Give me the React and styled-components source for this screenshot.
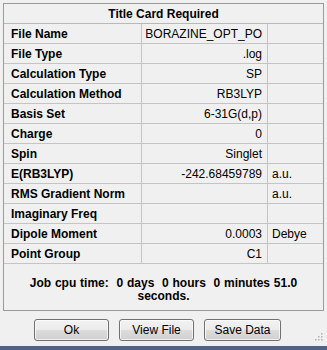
import React from 'react';
import styled, { createGlobalStyle } from 'styled-components';

const GlobalStyle = createGlobalStyle`
  html, body {
    margin: 0;
    padding: 0;
    background: #f0f0f0;
  }
  body {
    font-family: 'Liberation Sans', Arial, sans-serif;
    font-size: 12px;
    color: #000;
  }
`;

const Window = styled.div`
  width: 327px;
  height: 350px;
  display: flex;
  flex-direction: column;
  background: #f0f0f0;
  box-sizing: border-box;
  border-bottom: 4px solid #4d6580;
`;

const Panel = styled.div`
  margin: 3px 3px 0 3px;
  border: 1px solid #9a9a9a;
  height: 308px;
  box-sizing: border-box;
  display: flex;
  flex-direction: column;
`;

const Header = styled.div`
  height: 20px;
  display: flex;
  align-items: center;
  justify-content: center;
  font-weight: bold;
  border-bottom: 1px solid #b8b8b8;
  box-sizing: border-box;
`;

const Row = styled.div`
  display: grid;
  grid-template-columns: 138px 126px 1fr;
  height: 20px;
  border-bottom: 1px solid #c4c4c4;
  box-sizing: border-box;
`;

const Cell = styled.div`
  display: flex;
  align-items: center;
  padding: 0 ${(p) => (p.$align === 'right' ? '5px' : '4px')} 0 ${(p) => (p.$label ? '7px' : '4px')};
  justify-content: ${(p) => (p.$align === 'right' ? 'flex-end' : 'flex-start')};
  font-weight: ${(p) => (p.$label ? 'bold' : 'normal')};
  border-right: ${(p) => (p.$last ? 'none' : '1px solid #c4c4c4')};
  white-space: nowrap;
  overflow: hidden;
`;

const JobTime = styled.div`
  flex: 1;
  display: flex;
  flex-direction: column;
  align-items: center;
  padding-top: 13px;
  font-weight: bold;
  line-height: 13px;
  word-spacing: 0.5px;
`;

const ButtonBar = styled.div`
  flex: 1;
  display: flex;
  align-items: center;
  gap: 10px;
  padding: 3px 0 0 34px;
  position: relative;
`;

const Button = styled.button`
  width: ${(p) => p.$width || 75}px;
  height: 22px;
  border: 1px solid #707070;
  border-radius: 3px;
  background: linear-gradient(#f2f2f2 0%, #ebebeb 50%, #dddddd 51%, #cfcfcf 100%);
  font-family: 'Liberation Sans', Arial, sans-serif;
  font-size: 12px;
  color: #000;
  padding: 0;
  box-shadow: inset 0 0 0 1px rgba(255, 255, 255, 0.7);
`;

const Grip = styled.svg`
  position: absolute;
  right: 4px;
  bottom: 3px;
`;

const rows = [
  ['File Name', 'BORAZINE_OPT_PO', ''],
  ['File Type', '.log', ''],
  ['Calculation Type', 'SP', ''],
  ['Calculation Method', 'RB3LYP', ''],
  ['Basis Set', '6-31G(d,p)', ''],
  ['Charge', '0', ''],
  ['Spin', 'Singlet', ''],
  ['E(RB3LYP)', '-242.68459789', 'a.u.'],
  ['RMS Gradient Norm', '', 'a.u.'],
  ['Imaginary Freq', '', ''],
  ['Dipole Moment', '0.0003', 'Debye'],
  ['Point Group', 'C1', ''],
];

export default function App() {
  return (
    <>
      <GlobalStyle />
      <Window>
        <Panel>
          <Header>Title Card Required</Header>
          {rows.map(([label, value, unit]) => (
            <Row key={label}>
              <Cell $label>{label}</Cell>
              <Cell $align='right'>{value}</Cell>
              <Cell $last>{unit}</Cell>
            </Row>
          ))}
          <JobTime>
            <div>Job cpu time:&nbsp; 0 days&nbsp; 0 hours&nbsp; 0 minutes 51.0</div>
            <div>seconds.</div>
          </JobTime>
        </Panel>
        <ButtonBar>
          <Button>Ok</Button>
          <Button>View File</Button>
          <Button $width={77}>Save Data</Button>
          <Grip width='10' height='10' viewBox='0 0 10 10'>
            {[
              [8, 0], [8, 3], [5, 3], [8, 6], [5, 6], [2, 6],
            ].map(([x, y]) => (
              <rect key={`${x}-${y}`} x={x} y={y} width='1.5' height='1.5' fill='#b0b0b0' />
            ))}
          </Grip>
        </ButtonBar>
      </Window>
    </>
  );
}
